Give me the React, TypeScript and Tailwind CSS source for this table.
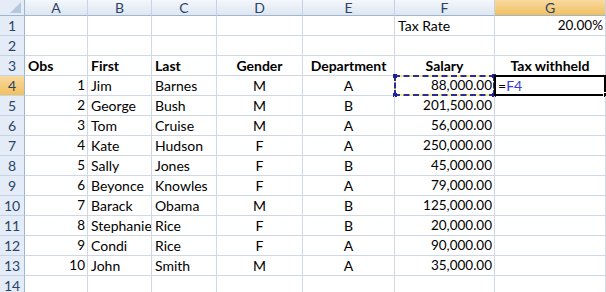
import React from 'react';

const cols = ['A', 'B', 'C', 'D', 'E', 'F', 'G'];

type Row = [number, string, string, string, string, string];

const people: Row[] = [
  [1, 'Jim', 'Barnes', 'M', 'A', '88,000.00'],
  [2, 'George', 'Bush', 'M', 'B', '201,500.00'],
  [3, 'Tom', 'Cruise', 'M', 'A', '56,000.00'],
  [4, 'Kate', 'Hudson', 'F', 'A', '250,000.00'],
  [5, 'Sally', 'Jones', 'F', 'B', '45,000.00'],
  [6, 'Beyonce', 'Knowles', 'F', 'A', '79,000.00'],
  [7, 'Barack', 'Obama', 'M', 'B', '125,000.00'],
  [8, 'Stephanie', 'Rice', 'F', 'B', '20,000.00'],
  [9, 'Condi', 'Rice', 'F', 'A', '90,000.00'],
  [10, 'John', 'Smith', 'M', 'A', '35,000.00'],
];

const cell = 'relative border-r border-b border-[#d0d7e5] px-[3px] leading-[19px] whitespace-nowrap text-black';
const num = 'text-right text-[13.5px] pr-[2px]';
const colHead =
  'border-r border-b border-r-[#c5d3e4] border-b-[#9eb6ce] text-center text-[14px] leading-[15px] text-[#2c4466]';
const rowHead =
  'border-r border-b border-r-[#9eb6ce] border-b-[#c5d3e4] text-center text-[14px] leading-[19px] text-[#2c4466]';

function Cell({ children, className = '' }: { children?: React.ReactNode; className?: string }) {
  return <div className={`${cell} ${className}`}>{children}</div>;
}

function RowHeader({ n, active = false }: { n: number; active?: boolean }) {
  return (
    <div
      className={`${rowHead} ${active ? 'bg-gradient-to-b from-[#f9d99f] to-[#f1c15f]' : 'bg-[#e4ecf7]'}`}
    >
      {n}
    </div>
  );
}

export default function App() {
  return (
    <div
      className="w-[606px] h-[292px] overflow-hidden bg-white text-[14px]"
      style={{ fontFamily: 'Lato, "Open Sans", sans-serif' }}
    >
      <div className="grid grid-cols-[25px_63px_64px_65px_86px_92px_100px_111px] grid-rows-[16px_repeat(14,20px)]">
        {/* corner */}
        <div className="relative border-r border-b border-[#9eb6ce] bg-[#e4ecf7]">
          <svg className="absolute right-[3px] bottom-[2px]" width="11" height="11" viewBox="0 0 11 11">
            <polygon points="11,0 11,11 0,11" fill="#b7c8dc" />
          </svg>
        </div>
        {cols.map((c) => (
          <div
            key={c}
            className={`${colHead} ${
              c === 'G'
                ? 'bg-gradient-to-b from-[#f9d99f] to-[#f1c15f]'
                : 'bg-gradient-to-b from-[#f4f7fc] to-[#dde6f1]'
            }`}
          >
            {c}
          </div>
        ))}

        {/* row 1 */}
        <RowHeader n={1} />
        <Cell />
        <Cell />
        <Cell />
        <Cell />
        <Cell />
        <Cell>Tax Rate</Cell>
        <Cell className={num}>20.00%</Cell>

        {/* row 2 */}
        <RowHeader n={2} />
        {cols.map((c) => (
          <Cell key={c} />
        ))}

        {/* row 3 */}
        <RowHeader n={3} />
        <Cell className="font-bold">Obs</Cell>
        <Cell className="font-bold">First</Cell>
        <Cell className="font-bold">Last</Cell>
        <Cell className="font-bold text-center">Gender</Cell>
        <Cell className="font-bold text-center">Department</Cell>
        <Cell className="font-bold text-center">Salary</Cell>
        <Cell className="font-bold text-center">Tax withheld</Cell>

        {people.map(([obs, first, last, gender, dept, salary], i) => {
          const n = i + 4;
          const active = n === 4;
          return (
            <React.Fragment key={n}>
              <RowHeader n={n} active={active} />
              <Cell className={num}>{obs}</Cell>
              <Cell className="overflow-hidden">{first}</Cell>
              <Cell>{last}</Cell>
              <Cell className="text-center">{gender}</Cell>
              <Cell className="text-center">{dept}</Cell>
              <Cell className={num}>
                {salary}
                {active && (
                  <>
                    <div className="absolute -left-px -top-px w-[101px] h-[21px] border-2 border-[#f2ee8a]" />
                    <div className="absolute -left-px -top-px w-[101px] h-[21px] border-2 border-dashed border-[#2b2b9e]" />
                    <div className="absolute -left-[2px] -top-[2px] w-[4px] h-[4px] bg-[#1f1f9a]" />
                    <div className="absolute -right-[2px] -top-[2px] w-[4px] h-[4px] bg-[#1f1f9a]" />
                    <div className="absolute -left-[2px] -bottom-[2px] w-[4px] h-[4px] bg-[#1f1f9a]" />
                    <div className="absolute -right-[2px] -bottom-[2px] w-[4px] h-[4px] bg-[#1f1f9a]" />
                  </>
                )}
              </Cell>
              <Cell>
                {active && (
                  <>
                    <span className="relative z-10">
                      =<span className="text-[#3b3bd6]">F4</span>
                    </span>
                    <div className="absolute -left-px -top-px w-[112px] h-[21px] border-2 border-black" />
                    <div className="absolute right-[-4px] bottom-[-3px] w-[6px] h-[6px] bg-black border border-white" />
                  </>
                )}
              </Cell>
            </React.Fragment>
          );
        })}

        {/* row 14 */}
        <RowHeader n={14} />
        {cols.map((c) => (
          <Cell key={c} />
        ))}
      </div>
    </div>
  );
}
